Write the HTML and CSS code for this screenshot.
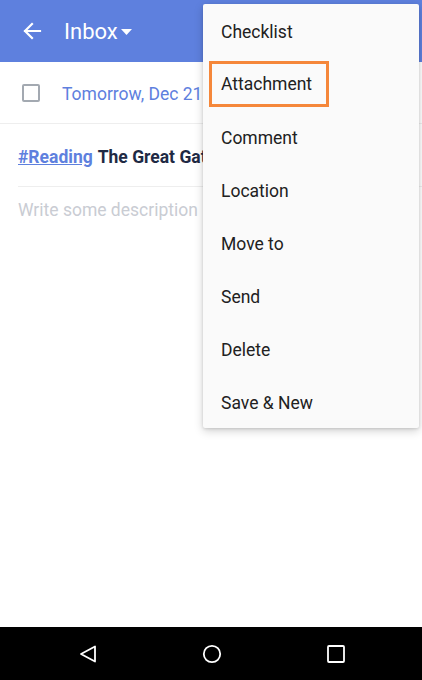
FILE: index.html
```html
<!DOCTYPE html>
<html>
<head>
<meta charset="utf-8">
<link rel="stylesheet" href="styles.css">
</head>
<body>
<div class="screen">
  <header class="appbar">
    <svg class="back" width="20" height="20" viewBox="0 0 20 20"><path d="M18 10H3M10 3L3 10l7 7" fill="none" stroke="#fff" stroke-width="2.2" stroke-linecap="square"/></svg>
    <span class="title">Inbox</span>
    <svg class="caret" width="11" height="6" viewBox="0 0 11 6"><path d="M0 0h11L5.5 6z" fill="#fff"/></svg>
  </header>
  <main class="content">
    <div class="row date-row">
      <span class="checkbox"></span>
      <span class="date">Tomorrow, Dec 21</span>
    </div>
    <div class="row task-title"><a class="tag">#Reading</a> The Great Gatsby</div>
    <div class="desc">Write some description</div>
  </main>
  <nav class="navbar">
    <svg width="20" height="20" viewBox="0 0 20 20"><path d="M17 2.5v15L3 10z" fill="none" stroke="#fff" stroke-width="1.8" stroke-linejoin="round"/></svg>
    <svg width="20" height="20" viewBox="0 0 20 20"><circle cx="10" cy="10" r="8.2" fill="none" stroke="#fff" stroke-width="1.8"/></svg>
    <svg width="20" height="20" viewBox="0 0 20 20"><rect x="2" y="2" width="16" height="16" rx="1" fill="none" stroke="#fff" stroke-width="1.8"/></svg>
  </nav>
  <ul class="menu">
    <li>Checklist</li>
    <li><span class="highlight">Attachment</span></li>
    <li>Comment</li>
    <li>Location</li>
    <li>Move to</li>
    <li>Send</li>
    <li>Delete</li>
    <li>Save &amp; New</li>
  </ul>
</div>
</body>
</html>
```
FILE: styles.css
```css
* { box-sizing: border-box; }
html, body { margin: 0; padding: 0; }
body { font-family: Roboto, "Liberation Sans", sans-serif; background: #fff; }
.screen { position: relative; width: 422px; height: 680px; display: flex; flex-direction: column; overflow: hidden; }
.appbar { height: 62px; background: #5e80de; display: flex; align-items: center; padding-left: 22px; color: #fff; flex-shrink: 0; }
.back { margin-right: 22px; }
.title { font-size: 22px; }
.caret { margin-left: 3px; margin-top: 1px; }
.content { flex: 1; }
.row { display: flex; align-items: center; border-bottom: 1px solid #eeeeee; }
.date-row { height: 62px; padding-left: 22px; padding-top: 2px; margin: 0; }
.checkbox { width: 18px; height: 18px; border: 2px solid #a3a9b1; border-radius: 2px; margin-right: 22px; margin-top: -2px; }
.date { color: #5e80de; font-size: 17.5px; }
.task-title { height: 63px; margin-left: 18px; font-size: 17.5px; font-weight: bold; color: #1f2a44; padding-top: 4px; }
.tag { color: #5e80de; text-decoration: underline; margin-right: 5px; }
.desc { margin-left: 18px; margin-top: 13px; font-size: 17.5px; color: #c9ccd3; }
.navbar { height: 53px; background: #000; display: flex; align-items: center; justify-content: space-between; padding: 0 76px 0 78px; flex-shrink: 0; }
.menu { position: absolute; top: 4px; left: 203px; width: 216px; margin: 0; padding: 0; list-style: none; background: #fafafa; border-radius: 2px; box-shadow: 0 3px 10px rgba(0,0,0,0.18), 0 1px 3px rgba(0,0,0,0.12); }
.menu li { height: 53px; display: flex; align-items: center; padding-left: 18px; padding-top: 2px; font-size: 17.5px; color: #212121; }
.highlight { display: flex; align-items: center; height: 46px; width: 120px; margin-left: -12px; margin-top: -2px; padding-left: 9px; border: 3px solid #f5873a; }
```
